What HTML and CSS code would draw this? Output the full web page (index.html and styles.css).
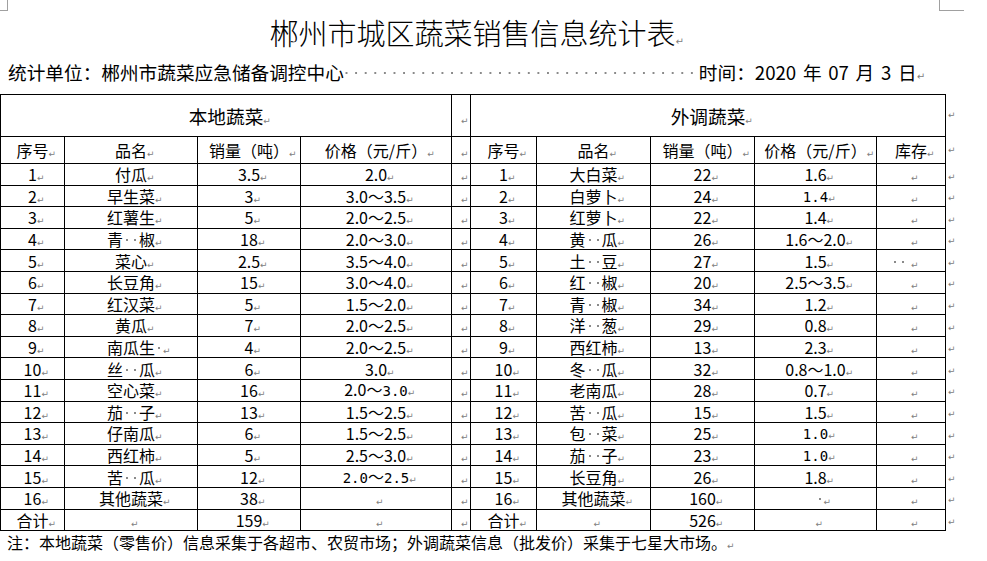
FILE: index.html
```html
<!DOCTYPE html>
<html lang="zh-CN">
<head>
<meta charset="utf-8">
<title>郴州市城区蔬菜销售信息统计表</title>
<link rel="stylesheet" href="styles.css">
</head>
<body>
<div class="page">
  <div class="crop crop-tl"></div>
  <div class="crop crop-tr"></div>
  <h1 class="title">郴州市城区蔬菜销售信息统计表<span class="pm">↵</span></h1>
  <p class="meta"><span>统计单位：郴州市蔬菜应急储备调控中心</span><span class="dots"></span><span class="date">时间：2020 年 07 月 3 日</span><span class="pm">↵</span></p>
  <table class="sheet">
    <colgroup>
      <col class="c1"><col class="c2"><col class="c3"><col class="c4"><col class="c5">
      <col class="c6"><col class="c7"><col class="c8"><col class="c9"><col class="c10"><col class="c11">
    </colgroup>
    <tbody>
      <tr class="band"><td colspan="4">本地蔬菜<span class="pm">↵</span></td><td><span class="pm">↵</span></td><td colspan="5">外调蔬菜<span class="pm">↵</span></td><td class="eol"><span class="pm">↵</span></td></tr>
      <tr class="head"><td>序号<span class="pm">↵</span></td><td>品名<span class="pm">↵</span></td><td>销量（吨）<span class="pm">↵</span></td><td>价格（元/斤）<span class="pm">↵</span></td><td><span class="pm">↵</span></td><td>序号<span class="pm">↵</span></td><td>品名<span class="pm">↵</span></td><td>销量（吨）<span class="pm">↵</span></td><td>价格（元/斤）<span class="pm">↵</span></td><td>库存<span class="pm">↵</span></td><td class="eol"><span class="pm">↵</span></td></tr>
      <tr class="row"><td>1<span class="pm">↵</span></td><td>付瓜<span class="pm">↵</span></td><td>3.5<span class="pm">↵</span></td><td>2.0<span class="pm">↵</span></td><td><span class="pm">↵</span></td><td>1<span class="pm">↵</span></td><td>大白菜<span class="pm">↵</span></td><td>22<span class="pm">↵</span></td><td>1.6<span class="pm">↵</span></td><td><span class="pm">↵</span></td><td class="eol"><span class="pm">↵</span></td></tr>
      <tr class="row"><td>2<span class="pm">↵</span></td><td>早生菜<span class="pm">↵</span></td><td>3<span class="pm">↵</span></td><td>3.0～3.5<span class="pm">↵</span></td><td><span class="pm">↵</span></td><td>2<span class="pm">↵</span></td><td>白萝卜<span class="pm">↵</span></td><td>24<span class="pm">↵</span></td><td><span class="m">1.4</span><span class="pm">↵</span></td><td><span class="pm">↵</span></td><td class="eol"><span class="pm">↵</span></td></tr>
      <tr class="row"><td>3<span class="pm">↵</span></td><td>红薯生<span class="pm">↵</span></td><td>5<span class="pm">↵</span></td><td>2.0～2.5<span class="pm">↵</span></td><td><span class="pm">↵</span></td><td>3<span class="pm">↵</span></td><td>红萝卜<span class="pm">↵</span></td><td>22<span class="pm">↵</span></td><td>1.4<span class="pm">↵</span></td><td><span class="pm">↵</span></td><td class="eol"><span class="pm">↵</span></td></tr>
      <tr class="row"><td>4<span class="pm">↵</span></td><td>青<span class="d"></span><span class="d"></span>椒<span class="pm">↵</span></td><td>18<span class="pm">↵</span></td><td>2.0～3.0<span class="pm">↵</span></td><td><span class="pm">↵</span></td><td>4<span class="pm">↵</span></td><td>黄<span class="d"></span><span class="d"></span>瓜<span class="pm">↵</span></td><td>26<span class="pm">↵</span></td><td>1.6～2.0<span class="pm">↵</span></td><td><span class="pm">↵</span></td><td class="eol"><span class="pm">↵</span></td></tr>
      <tr class="row"><td>5<span class="pm">↵</span></td><td>菜心<span class="pm">↵</span></td><td>2.5<span class="pm">↵</span></td><td>3.5～4.0<span class="pm">↵</span></td><td><span class="pm">↵</span></td><td>5<span class="pm">↵</span></td><td>土<span class="d"></span><span class="d"></span>豆<span class="pm">↵</span></td><td>27<span class="pm">↵</span></td><td>1.5<span class="pm">↵</span></td><td><span class="lead"><span class="d"></span><span class="d"></span></span><span class="pm">↵</span></td><td class="eol"><span class="pm">↵</span></td></tr>
      <tr class="row"><td>6<span class="pm">↵</span></td><td>长豆角<span class="pm">↵</span></td><td>15<span class="pm">↵</span></td><td>3.0～4.0<span class="pm">↵</span></td><td><span class="pm">↵</span></td><td>6<span class="pm">↵</span></td><td>红<span class="d"></span><span class="d"></span>椒<span class="pm">↵</span></td><td>20<span class="pm">↵</span></td><td>2.5～3.5<span class="pm">↵</span></td><td><span class="pm">↵</span></td><td class="eol"><span class="pm">↵</span></td></tr>
      <tr class="row"><td>7<span class="pm">↵</span></td><td>红汉菜<span class="pm">↵</span></td><td>5<span class="pm">↵</span></td><td>1.5～2.0<span class="pm">↵</span></td><td><span class="pm">↵</span></td><td>7<span class="pm">↵</span></td><td>青<span class="d"></span><span class="d"></span>椒<span class="pm">↵</span></td><td>34<span class="pm">↵</span></td><td>1.2<span class="pm">↵</span></td><td><span class="pm">↵</span></td><td class="eol"><span class="pm">↵</span></td></tr>
      <tr class="row"><td>8<span class="pm">↵</span></td><td>黄瓜<span class="pm">↵</span></td><td>7<span class="pm">↵</span></td><td>2.0～2.5<span class="pm">↵</span></td><td><span class="pm">↵</span></td><td>8<span class="pm">↵</span></td><td>洋<span class="d"></span><span class="d"></span>葱<span class="pm">↵</span></td><td>29<span class="pm">↵</span></td><td>0.8<span class="pm">↵</span></td><td><span class="pm">↵</span></td><td class="eol"><span class="pm">↵</span></td></tr>
      <tr class="row"><td>9<span class="pm">↵</span></td><td>南瓜生<span class="pm"><span class="d"></span>↵</span></td><td>4<span class="pm">↵</span></td><td>2.0～2.5<span class="pm">↵</span></td><td><span class="pm">↵</span></td><td>9<span class="pm">↵</span></td><td>西红柿<span class="pm">↵</span></td><td>13<span class="pm">↵</span></td><td>2.3<span class="pm">↵</span></td><td><span class="pm">↵</span></td><td class="eol"><span class="pm">↵</span></td></tr>
      <tr class="row"><td>10<span class="pm">↵</span></td><td>丝<span class="d"></span><span class="d"></span>瓜<span class="pm">↵</span></td><td>6<span class="pm">↵</span></td><td>3.0<span class="pm">↵</span></td><td><span class="pm">↵</span></td><td>10<span class="pm">↵</span></td><td>冬<span class="d"></span><span class="d"></span>瓜<span class="pm">↵</span></td><td>32<span class="pm">↵</span></td><td>0.8～1.0<span class="pm">↵</span></td><td><span class="pm">↵</span></td><td class="eol"><span class="pm">↵</span></td></tr>
      <tr class="row"><td>11<span class="pm">↵</span></td><td>空心菜<span class="pm">↵</span></td><td>16<span class="pm">↵</span></td><td>2.0～<span class="m">3.0</span><span class="pm">↵</span></td><td><span class="pm">↵</span></td><td>11<span class="pm">↵</span></td><td>老南瓜<span class="pm">↵</span></td><td>28<span class="pm">↵</span></td><td>0.7<span class="pm">↵</span></td><td><span class="pm">↵</span></td><td class="eol"><span class="pm">↵</span></td></tr>
      <tr class="row"><td>12<span class="pm">↵</span></td><td>茄<span class="d"></span><span class="d"></span>子<span class="pm">↵</span></td><td>13<span class="pm">↵</span></td><td>1.5～2.5<span class="pm">↵</span></td><td><span class="pm">↵</span></td><td>12<span class="pm">↵</span></td><td>苦<span class="d"></span><span class="d"></span>瓜<span class="pm">↵</span></td><td>15<span class="pm">↵</span></td><td>1.5<span class="pm">↵</span></td><td><span class="pm">↵</span></td><td class="eol"><span class="pm">↵</span></td></tr>
      <tr class="row"><td>13<span class="pm">↵</span></td><td>仔南瓜<span class="pm">↵</span></td><td>6<span class="pm">↵</span></td><td>1.5～2.5<span class="pm">↵</span></td><td><span class="pm">↵</span></td><td>13<span class="pm">↵</span></td><td>包<span class="d"></span><span class="d"></span>菜<span class="pm">↵</span></td><td>25<span class="pm">↵</span></td><td><span class="m">1.0</span><span class="pm">↵</span></td><td><span class="pm">↵</span></td><td class="eol"><span class="pm">↵</span></td></tr>
      <tr class="row"><td>14<span class="pm">↵</span></td><td>西红柿<span class="pm">↵</span></td><td>5<span class="pm">↵</span></td><td>2.5～3.0<span class="pm">↵</span></td><td><span class="pm">↵</span></td><td>14<span class="pm">↵</span></td><td>茄<span class="d"></span><span class="d"></span>子<span class="pm">↵</span></td><td>23<span class="pm">↵</span></td><td><span class="m">1.0</span><span class="pm">↵</span></td><td><span class="pm">↵</span></td><td class="eol"><span class="pm">↵</span></td></tr>
      <tr class="row"><td>15<span class="pm">↵</span></td><td>苦<span class="d"></span><span class="d"></span>瓜<span class="pm">↵</span></td><td>12<span class="pm">↵</span></td><td><span class="m">2.0</span>～<span class="m">2.5</span><span class="pm">↵</span></td><td><span class="pm">↵</span></td><td>15<span class="pm">↵</span></td><td>长豆角<span class="pm">↵</span></td><td>26<span class="pm">↵</span></td><td>1.8<span class="pm">↵</span></td><td><span class="pm">↵</span></td><td class="eol"><span class="pm">↵</span></td></tr>
      <tr class="row"><td>16<span class="pm">↵</span></td><td>其他蔬菜<span class="pm">↵</span></td><td>38<span class="pm">↵</span></td><td><span class="pm">↵</span></td><td><span class="pm">↵</span></td><td>16<span class="pm">↵</span></td><td>其他蔬菜<span class="pm">↵</span></td><td>160<span class="pm">↵</span></td><td><span class="pm"><span class="d"></span>↵</span></td><td><span class="pm">↵</span></td><td class="eol"><span class="pm">↵</span></td></tr>
      <tr class="row"><td>合计<span class="pm">↵</span></td><td><span class="pm">↵</span></td><td>159<span class="pm">↵</span></td><td><span class="pm">↵</span></td><td><span class="pm">↵</span></td><td>合计<span class="pm">↵</span></td><td><span class="pm">↵</span></td><td>526<span class="pm">↵</span></td><td><span class="pm">↵</span></td><td><span class="pm">↵</span></td><td class="eol"><span class="pm">↵</span></td></tr>
    </tbody>
  </table>
  <p class="note">注：本地蔬菜（零售价）信息采集于各超市、农贸市场；外调蔬菜信息（批发价）采集于七星大市场。<span class="pm">↵</span></p>
</div>
</body>
</html>
```
FILE: styles.css
```css
* { box-sizing: border-box; }

body {
  margin: 0;
  background: #ffffff;
  color: #000000;
  font-family: "Noto Sans CJK SC", sans-serif;
}

.page {
  position: relative;
  width: 987px;
  height: 561px;
  overflow: hidden;
}

/* page crop marks (decoration over the page) */
.crop {
  position: absolute;
  top: 0;
  height: 11px;
  border-bottom: 1px solid #a0a0a0;
}
.crop-tl { left: 0; width: 8px; border-right: 1px solid #a0a0a0; }
.crop-tr { left: 939px; width: 25px; border-left: 1px solid #a0a0a0; }

/* paragraph marks */
.pm {
  display: inline-block;
  width: 0;
  white-space: nowrap;
  text-align: left;
  font-family: "DejaVu Sans", sans-serif;
  font-size: 9px;
  font-weight: 400;
  line-height: 1;
  color: #808080;
}

.title {
  margin: 12px 0 0;
  width: 945px;
  text-align: center;
  font-size: 29px;
  font-weight: 300;
  line-height: 40px;
}
.title .pm { font-size: 10px; }

.meta {
  margin: 6px 0 0;
  padding-left: 8px;
  font-size: 18.67px;
  line-height: 28px;
  white-space: nowrap;
}
.meta .pm { font-size: 10px; }

.dots {
  display: inline-block;
  width: 355px;
  height: 28px;
  vertical-align: top;
  background-image: radial-gradient(circle, #8a8a8a 0.9px, transparent 1.4px);
  background-size: 9.6px 28px;
  background-position: -2.3px 1px;
  background-repeat: repeat-x;
}

.date { word-spacing: 2.5px; }

.sheet {
  border-collapse: collapse;
  table-layout: fixed;
  margin-top: 8px;
}

.c1 { width: 64px; }
.c2 { width: 133px; }
.c3 { width: 103px; }
.c4 { width: 151px; }
.c5 { width: 19px; }
.c6 { width: 66px; }
.c7 { width: 114px; }
.c8 { width: 104px; }
.c9 { width: 122px; }
.c10 { width: 69px; }
.c11 { width: 20px; }

.sheet td {
  border: 1px solid #000000;
  padding: 0;
  text-align: center;
  vertical-align: middle;
  font-size: 16px;
  line-height: 18px;
  white-space: nowrap;
}

.sheet tr.band { height: 42px; }
.sheet tr.band td { font-size: 18.67px; line-height: 22px; }
.sheet tr.head { height: 27px; }
.sheet tr.row { height: 21.6px; }

.sheet td.eol {
  border: none;
  text-align: left;
  vertical-align: top;
  padding: 4px 0 0 2px;
  line-height: 10px;
}

/* SimSun-like half-width digits */
.m {
  font-family: "DejaVu Sans Mono", monospace;
  font-size: 14px;
}

/* visible space markers */
.d {
  display: inline-block;
  width: 8px;
  height: 14px;
  vertical-align: -1px;
  background-image: radial-gradient(circle, #8a8a8a 0.8px, transparent 1.3px);
}

.lead {
  display: inline-block;
  width: 16px;
  margin: 0 4px 0 -20px;
  white-space: nowrap;
}

.note {
  margin: 0;
  padding-left: 7px;
  font-size: 16px;
  line-height: 22px;
  white-space: nowrap;
}
```
